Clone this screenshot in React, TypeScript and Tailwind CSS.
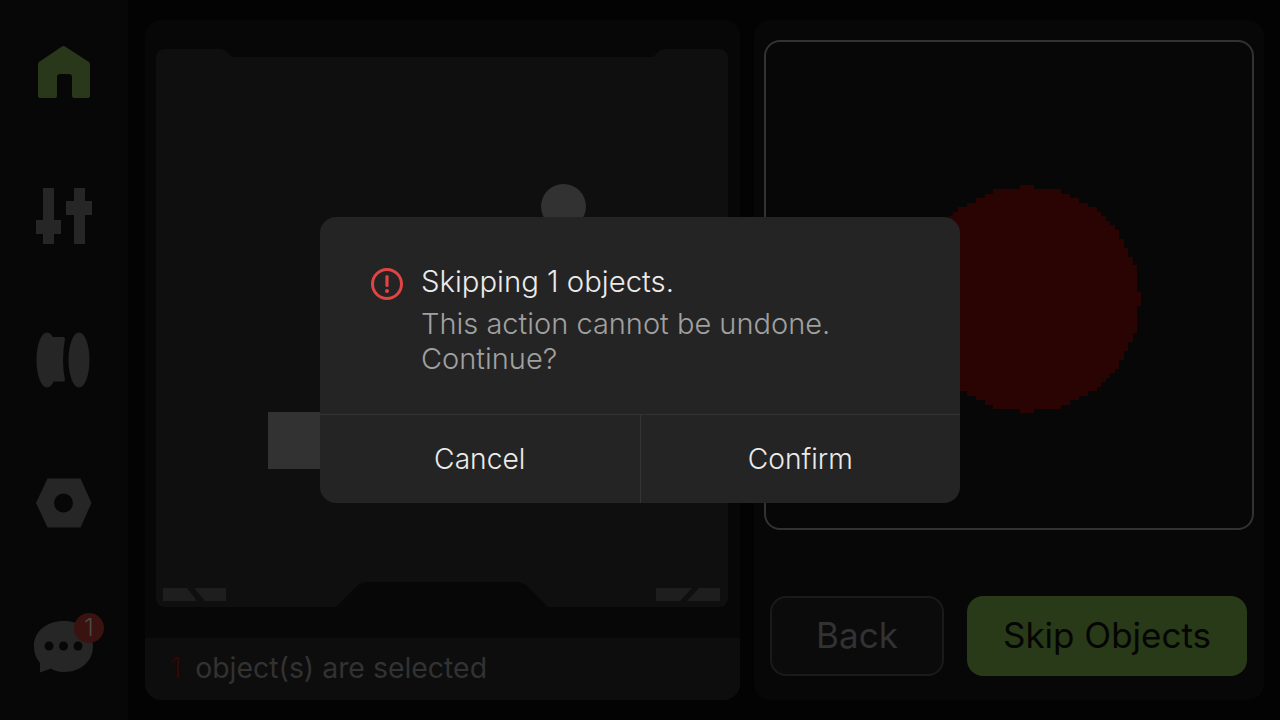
import React from 'react';

const FONT = { fontFamily: 'Inter, "Noto Sans", sans-serif' };

const HomeIcon = () => (
  <svg width="54" height="54" viewBox="0 0 54 54">
    <path
      fill="#29381a"
      d="M25 1.500 Q26.500 0.500 28 1.500 L52 17 Q53 18 53 20 V51 Q53 53 51 53 H37 Q35 53 35 51 V32 Q35 29 32 29 H23 Q20 29 20 32 V51 Q20 53 18 53 H3 Q1 53 1 51 V20 Q1 18 2 17 Z"
    />
  </svg>
);

const TuneIcon = () => (
  <svg width="58" height="58" viewBox="0 0 58 58" fill="#262626">
    <rect x="8" y="1" width="11" height="56" />
    <rect x="1" y="33" width="25" height="14" />
    <rect x="39" y="1" width="11" height="56" />
    <rect x="31" y="14" width="26" height="14" />
  </svg>
);

const SpoolIcon = () => (
  <svg width="56" height="58" viewBox="0 0 56 58" fill="#262626">
    <ellipse cx="11" cy="29" rx="10.500" ry="27.500" />
    <path d="M14 6 H27 Q29 6 29 8 Q25 29 29 49 Q29 50.500 27 50.500 H14 Z" />
    <ellipse cx="43" cy="29" rx="10.500" ry="27.500" />
  </svg>
);

const NutIcon = () => (
  <svg width="56" height="50" viewBox="0 0 56 50">
    <path
      fill="#262626"
      fillRule="evenodd"
      d="M11.500 0.500 H44.500 L55.500 25 L44.500 49.500 H11.500 L0 25 Z M27.500 15.500 A9.500 9.500 0 1 0 27.500 34.500 A9.500 9.500 0 1 0 27.500 15.500 Z"
    />
  </svg>
);

const ChatIcon = () => (
  <svg width="60" height="52" viewBox="0 0 60 52">
    <path
      fill="#262626"
      fillRule="evenodd"
      d="M30 0 C47 0 59 10 59 25 C59 40 47 51 30 51 C24 51 20 49.500 17 47.500 L6 51.500 L6 42 C2 37 0 32 0 25 C0 10 13 0 30 0 Z"
    />
    <circle cx="15" cy="25" r="4.500" fill="#070707" />
    <circle cx="29.500" cy="25" r="4.500" fill="#070707" />
    <circle cx="44" cy="25" r="4.500" fill="#070707" />
  </svg>
);

const PlateShape = () => (
  <svg className="block" width="572" height="558" viewBox="0 0 572 558">
    <path
      fill="#0f0f0f"
      d="M0 10 Q0 0 10 0 H64 Q68 0 71 3 L76 8 H497 L502 3 Q505 0 509 0 H562 Q572 0 572 10 V548 Q572 558 562 558 H392 L372 538 Q367 533 360 533 H212 Q205 533 200 538 L180 558 H10 Q0 558 0 548 Z"
    />
    <g fill="#1e1e1e">
      <path d="M7 539 H31 L41 552 H7 Z" />
      <path d="M38 539 H70 V552 H49 Z" />
      <path d="M500 539 H536 L524 552 H500 Z" />
      <path d="M543 539 H564 V552 H531 Z" />
    </g>
  </svg>
);

// The selected object is drawn as a coarse raster in the preview
const CELL = 4.47;
const RADIUS = 25.05;
const cells: { x: number; y: number }[] = [];
for (let y = -26; y <= 26; y++) {
  for (let x = -26; x <= 26; x++) {
    if (x * x + y * y <= RADIUS * RADIUS) cells.push({ x, y });
  }
}

const RasterCircle = () => (
  <svg width="240" height="240" viewBox="-120 -120 240 240" shapeRendering="crispEdges">
    {cells.map((c) => (
      <rect
        key={`${c.x}-${c.y}`}
        x={c.x * CELL - CELL / 2}
        y={c.y * CELL - CELL / 2}
        width={CELL + 0.5}
        height={CELL + 0.5}
        fill="#2a0303"
      />
    ))}
  </svg>
);

export default function App() {
  return (
    <div className="relative flex h-[720px] w-[1280px] overflow-hidden bg-[#030303]" style={FONT}>
      {/* Sidebar */}
      <div className="flex h-full w-[128px] flex-col items-center bg-[#070707] pt-[45px]">
        <HomeIcon />
        <div className="mt-[88px]"><TuneIcon /></div>
        <div className="mt-[86px]"><SpoolIcon /></div>
        <div className="mt-[89px]"><NutIcon /></div>
        <div className="relative mt-[93px]">
          <ChatIcon />
          <div className="absolute left-[40px] top-[-8px] flex h-[30px] w-[30px] items-center justify-center rounded-full bg-[#3a1210] text-[24px] font-light text-[#4a4a4a]">
            1
          </div>
        </div>
      </div>

      {/* Plate panel */}
      <div className="ml-[17px] mt-[20px] flex h-[680px] w-[595px] flex-col overflow-hidden rounded-[16px] bg-[#070707]">
        <div className="relative ml-[11px] mt-[29px] h-[589px] w-[572px]">
          <PlateShape />
          <div className="absolute left-[385px] top-[135px] h-[45px] w-[45px] rounded-full bg-[#323232]" />
          <div className="absolute left-[112px] top-[363px] h-[57px] w-[60px] bg-[#323232]" />
        </div>
        <div className="flex flex-1 items-center gap-[14px] bg-[#0d0d0d] pb-[2px] pl-[25px] text-[28.4px]">
          <span className="font-light text-[#3a0404]">1</span>
          <span className="text-[#323232]">object(s) are selected</span>
        </div>
      </div>

      {/* Preview panel */}
      <div className="ml-[14px] mt-[20px] flex h-[680px] w-[510px] flex-col rounded-[16px] bg-[#070707] px-[10px] pt-[20px]">
        <div className="relative h-[490px] w-[490px] overflow-hidden rounded-[16px] border-2 border-[#323232]">
          <div className="absolute left-[141px] top-[137px]"><RasterCircle /></div>
        </div>
        <div className="mt-[66px] flex gap-[23px] pl-[6px]">
          <button className="flex h-[80px] w-[174px] items-center justify-center rounded-[16px] border-2 border-[#1a1a1a] bg-[#0b0b0b] pb-[2px] text-[35px] text-[#323232]">
            Back
          </button>
          <button className="flex h-[80px] w-[280px] items-center justify-center rounded-[16px] bg-[#293a18] pb-[2px] text-[35px] text-[#050505]">
            Skip Objects
          </button>
        </div>
      </div>

      {/* Confirm dialog */}
      <div className="absolute left-[320px] top-[217px] flex h-[286px] w-[640px] flex-col rounded-[16px] bg-[#242424]">
        <div className="flex h-[198px] gap-[18px] border-b border-[#343434] pl-[51px] pt-[46px]">
          <svg className="mt-[5px] shrink-0" width="32" height="32" viewBox="0 0 32 32" fill="none">
            <circle cx="16" cy="16" r="14.500" stroke="#e04444" strokeWidth="3" />
            <path d="M16 8.500 V17.500" stroke="#e04444" strokeWidth="3.200" strokeLinecap="round" />
            <circle cx="16" cy="23" r="2" fill="#e04444" />
          </svg>
          <div>
            <div className="text-[29.3px] font-light leading-[38px] text-[#ebebeb]">Skipping 1 objects.</div>
            <div className="mt-[5px] text-[29px] font-light leading-[35px] text-[#a0a0a0]">
              This action cannot be undone.
              <br />
              Continue?
            </div>
          </div>
        </div>
        <div className="flex flex-1 text-[28.2px] font-light text-[#ebebeb]">
          <button className="flex-1">Cancel</button>
          <button className="flex-1 border-l border-[#343434]">Confirm</button>
        </div>
      </div>
    </div>
  );
}
